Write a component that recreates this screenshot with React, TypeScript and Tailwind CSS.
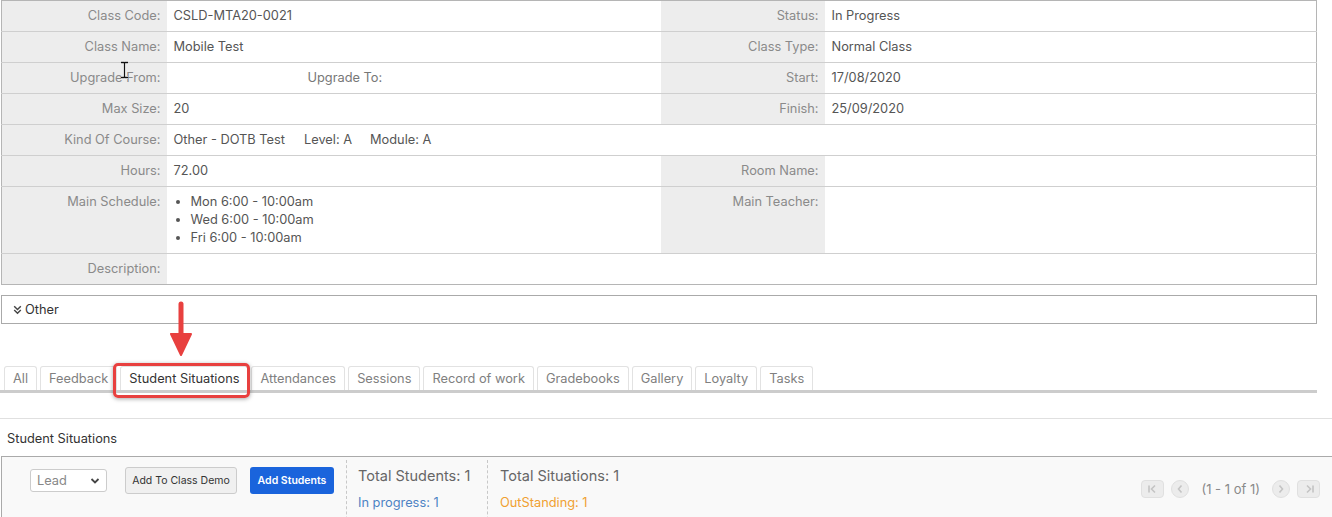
import React from 'react';

const font = { fontFamily: 'Inter, "Liberation Sans", sans-serif' };

const Label = ({ children, className = '' }: { children?: React.ReactNode; className?: string }) => (
  <td className={`w-[165px] bg-[#ededed] pr-[6px] text-right align-top pt-[6px] text-[#8a8a8a] ${className}`}>{children}</td>
);

const Value = ({ children, colSpan, className = '' }: { children?: React.ReactNode; colSpan?: number; className?: string }) => (
  <td colSpan={colSpan} className={`pl-[7px] align-top pt-[6px] text-[#555] ${className}`}>{children}</td>
);

const tabs = ['All', 'Feedback', 'Student Situations', 'Attendances', 'Sessions', 'Record of work', 'Gradebooks', 'Gallery', 'Loyalty', 'Tasks'];

const App: React.FC = () => {
  return (
    <div className="relative w-[1332px] h-[517px] overflow-hidden bg-white text-[12.8px] leading-[17px]" style={font}>
      {/* 詳細テーブル */}
      <table className="ml-[1px] w-[1316px] border-collapse border border-[#b5b5b5] table-fixed">
        <colgroup>
          <col className="w-[165px]" />
          <col className="w-[494px]" />
          <col className="w-[164px]" />
          <col />
        </colgroup>
        <tbody>
          <tr className="h-[31px] border-b border-[#cfcfcf]">
            <Label>Class Code:</Label>
            <Value>CSLD-MTA20-0021</Value>
            <Label>Status:</Label>
            <Value className="text-[#1a1ab8]">In Progress</Value>
          </tr>
          <tr className="h-[31px] border-b border-[#cfcfcf]">
            <Label>Class Name:</Label>
            <Value>Mobile Test</Value>
            <Label>Class Type:</Label>
            <Value>Normal Class</Value>
          </tr>
          <tr className="h-[31px] border-b border-[#cfcfcf]">
            <Label>Upgrade From:</Label>
            <Value>
              <span className="ml-[134px] text-[#777]">Upgrade To:</span>
            </Value>
            <Label>Start:</Label>
            <Value>17/08/2020</Value>
          </tr>
          <tr className="h-[31px] border-b border-[#cfcfcf]">
            <Label>Max Size:</Label>
            <Value>20</Value>
            <Label>Finish:</Label>
            <Value>25/09/2020</Value>
          </tr>
          <tr className="h-[31px] border-b border-[#cfcfcf]">
            <Label>Kind Of Course:</Label>
            <Value colSpan={3}>
              Other - DOTB Test<span className="ml-[19px]">Level: A</span>
              <span className="ml-[18px]">Module: A</span>
            </Value>
          </tr>
          <tr className="h-[31px] border-b border-[#cfcfcf]">
            <Label>Hours:</Label>
            <Value>72.00</Value>
            <Label>Room Name:</Label>
            <Value />
          </tr>
          <tr className="h-[67px] border-b border-[#cfcfcf]">
            <Label>Main Schedule:</Label>
            <Value>
              <ul className="list-disc pl-[17px] leading-[18px]">
                <li>Mon 6:00 - 10:00am</li>
                <li>Wed 6:00 - 10:00am</li>
                <li>Fri 6:00 - 10:00am</li>
              </ul>
            </Value>
            <Label>Main Teacher:</Label>
            <Value />
          </tr>
          <tr className="h-[31px]">
            <Label>Description:</Label>
            <Value colSpan={3} />
          </tr>
        </tbody>
      </table>

      {/* Other */}
      <div className="ml-[1px] mt-[10px] w-[1316px] h-[29px] border border-[#aaa] flex items-center pl-[10px] gap-[2px] text-[#333]">
        <svg width="11" height="11" viewBox="0 0 10 10" fill="none" stroke="#444" strokeWidth="1.3">
          <path d="M2 2l3 3 3-3M2 5.5l3 3 3-3" />
        </svg>
        <span>Other</span>
      </div>

      {/* タブ */}
      <div className="mt-[42px] w-[1317px] flex items-end gap-[3px] pl-[4px] border-b-[3px] border-[#cccccc]">
        {tabs.map((t) => (
          <div
            key={t}
            className={`h-[24px] px-[8px] flex items-center border border-b-0 border-[#e2e2e2] rounded-t-[3px] ${
              t === 'Student Situations' ? 'text-[#333]' : 'text-[#808080]'
            }`}
          >
            {t}
          </div>
        ))}
      </div>

      <div className="mt-[25px] h-px bg-[#e0e0e0]" />

      <div className="mt-[11px] pl-[7px] text-[#333]">Student Situations</div>

      {/* Student Situations パネル */}
      <div className="mt-[9px] ml-[1px] w-[1340px] h-[80px] border border-[#aaa] bg-[#f9f9f9] flex">
        <div className="flex items-start gap-[13px] pl-[28px] pt-[10px] pr-[12px]">
          <div className="mt-[2px] w-[77px] h-[23px] border border-[#ccc] rounded-[3px] bg-white flex items-center justify-between px-[6px] text-[#888]">
            <span>Lead</span>
            <svg width="10" height="8" viewBox="0 0 10 8" fill="none" stroke="#444" strokeWidth="1.8">
              <path d="M1.5 2l3.5 3.5L8.5 2" />
            </svg>
          </div>
          <button className="ml-[5px] h-[27px] w-[112px] border border-[#ccc] rounded-[3px] bg-[#f0f0f0] text-[10.5px] text-[#333]">
            Add To Class Demo
          </button>
          <button className="h-[27px] w-[84px] rounded-[3px] bg-[#1a64dc] text-[10.5px] font-semibold text-white">
            Add Students
          </button>
        </div>
        <div className="border-l border-dashed border-[#c8c8c8] mt-[3px] pl-[11px] pt-[7px] w-[141px]">
          <div className="text-[14.5px] leading-[18px] text-[#666]">Total Students: 1</div>
          <div className="mt-[9px] text-[#4d83c4]">In progress: 1</div>
        </div>
        <div className="border-l border-dashed border-[#c8c8c8] mt-[3px] pl-[12px] pt-[7px]">
          <div className="text-[14.5px] leading-[18px] text-[#666]">Total Situations: 1</div>
          <div className="mt-[9px] text-[#f0a030]">OutStanding: 1</div>
        </div>
        <div className="ml-auto mr-[20px] mt-[23px] flex items-center h-[18px] gap-[7px] text-[#999]">
          <div className="w-[23px] h-[18px] rounded-[4px] bg-[#ececec] border border-[#e0e0e0] flex items-center justify-center">
            <svg width="12" height="10" viewBox="0 0 12 10" fill="none" stroke="#c4c4c4" strokeWidth="1.6">
              <path d="M2 1.5v7M8 1.5L4.5 5 8 8.5" />
            </svg>
          </div>
          <div className="w-[18px] h-[18px] rounded-full bg-[#ececec] border border-[#e0e0e0] flex items-center justify-center">
            <svg width="8" height="10" viewBox="0 0 8 10" fill="none" stroke="#c4c4c4" strokeWidth="1.6">
              <path d="M5.5 1.5L2.5 5l3 3.5" />
            </svg>
          </div>
          <span className="px-[5px] text-[13px] text-[#8a8a8a]">(1 - 1 of 1)</span>
          <div className="w-[18px] h-[18px] rounded-full bg-[#ececec] border border-[#e0e0e0] flex items-center justify-center">
            <svg width="8" height="10" viewBox="0 0 8 10" fill="none" stroke="#c4c4c4" strokeWidth="1.6">
              <path d="M2.5 1.5L5.5 5l-3 3.5" />
            </svg>
          </div>
          <div className="w-[23px] h-[18px] rounded-[4px] bg-[#ececec] border border-[#e0e0e0] flex items-center justify-center">
            <svg width="12" height="10" viewBox="0 0 12 10" fill="none" stroke="#c4c4c4" strokeWidth="1.6">
              <path d="M10 1.5v7M4 1.5L7.5 5 4 8.5" />
            </svg>
          </div>
        </div>
      </div>

      {/* 注釈：赤い矢印と枠 */}
      <svg className="absolute left-[168px] top-[301px]" width="26" height="56" viewBox="0 0 26 56">
        <path d="M13 3v32" stroke="#e8403f" strokeWidth="5" strokeLinecap="round" />
        <path d="M3 33h20l-10 21z" fill="#e8403f" strokeLinejoin="round" stroke="#e8403f" strokeWidth="2" />
      </svg>
      <div className="absolute left-[113px] top-[363px] w-[137px] h-[35px] rounded-[5px] border-[3px] border-[#e8403f] shadow-[0_1px_4px_rgba(0,0,0,0.35)]" />

      {/* テキストカーソル */}
      <svg className="absolute left-[119px] top-[61px]" width="11" height="18" viewBox="0 0 11 18">
        <path d="M2 1.5h3l.5.5.5-.5h3M5.5 2v14M2 16.5h3l.5-.5.5.5h3" stroke="#fff" strokeWidth="3" fill="none" />
        <path d="M2 1.5h3l.5.5.5-.5h3M5.5 2v14M2 16.5h3l.5-.5.5.5h3" stroke="#111" strokeWidth="1.3" fill="none" />
      </svg>
    </div>
  );
};

export default App;
